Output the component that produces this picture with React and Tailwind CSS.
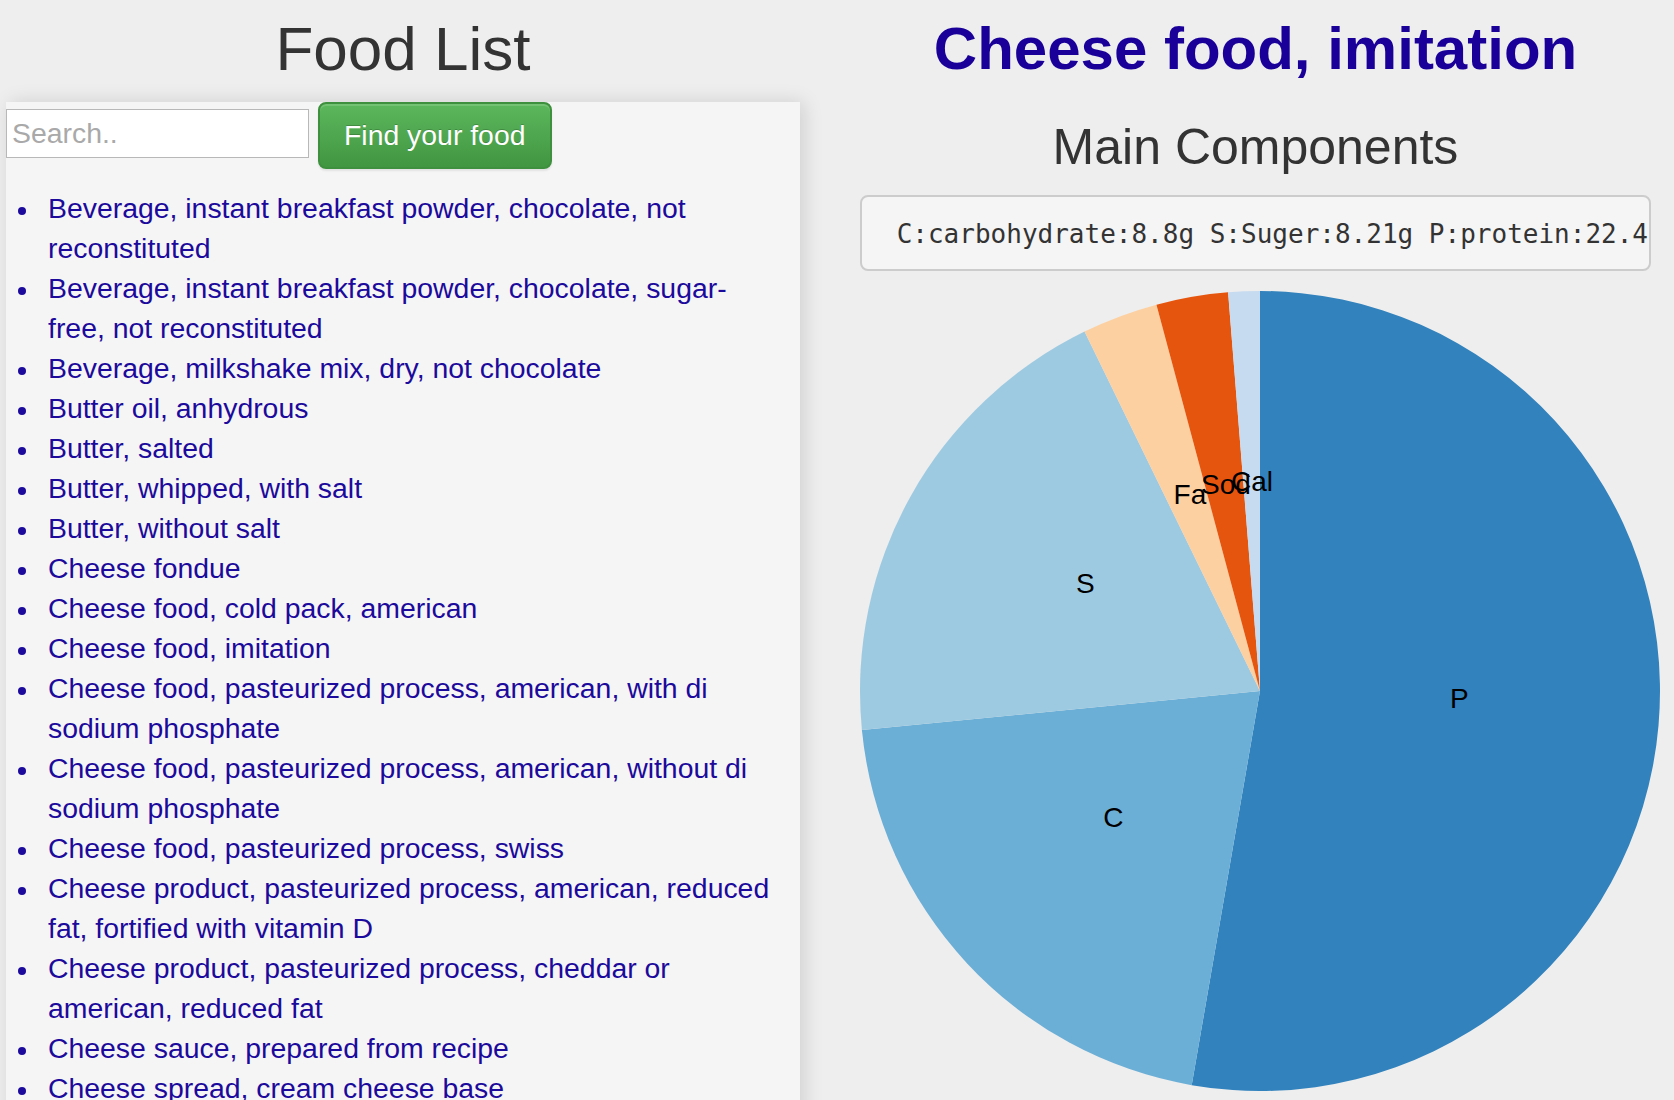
import React from "react";

const foods = [
  "Beverage, instant breakfast powder, chocolate, not reconstituted",
  "Beverage, instant breakfast powder, chocolate, sugar-free, not reconstituted",
  "Beverage, milkshake mix, dry, not chocolate",
  "Butter oil, anhydrous",
  "Butter, salted",
  "Butter, whipped, with salt",
  "Butter, without salt",
  "Cheese fondue",
  "Cheese food, cold pack, american",
  "Cheese food, imitation",
  "Cheese food, pasteurized process, american, with di sodium phosphate",
  "Cheese food, pasteurized process, american, without di sodium phosphate",
  "Cheese food, pasteurized process, swiss",
  "Cheese product, pasteurized process, american, reduced fat, fortified with vitamin D",
  "Cheese product, pasteurized process, cheddar or american, reduced fat",
  "Cheese sauce, prepared from recipe",
  "Cheese spread, cream cheese base",
  "Cheese spread, pasteurized process, american",
  "Cheese, american cheddar, imitation",
];

const slices = [
  { label: "P", value: 22.4, color: "#3182bd" },
  { label: "C", value: 8.8, color: "#6baed6" },
  { label: "S", value: 8.21, color: "#9ecae1" },
  { label: "Fa", value: 1.3, color: "#fdd0a2" },
  { label: "Sod", value: 1.23, color: "#e6550d" },
  { label: "Cal", value: 0.54, color: "#c6dbef" },
];

function Pie() {
  const cx = 400;
  const cy = 400;
  const r = 400;
  const total = slices.reduce((s, d) => s + d.value, 0);
  let a = 0;
  const arcs = slices.map((d) => {
    const a0 = a;
    const a1 = a + (d.value / total) * Math.PI * 2;
    a = a1;
    const x0 = cx + r * Math.sin(a0);
    const y0 = cy - r * Math.cos(a0);
    const x1 = cx + r * Math.sin(a1);
    const y1 = cy - r * Math.cos(a1);
    const large = a1 - a0 > Math.PI ? 1 : 0;
    const path = `M${cx},${cy}L${x0},${y0}A${r},${r} 0 ${large} 1 ${x1},${y1}Z`;
    const m = (a0 + a1) / 2;
    return {
      ...d,
      path,
      lx: cx + (r / 2) * Math.sin(m),
      ly: cy - (r / 2) * Math.cos(m),
    };
  });
  return (
    <svg width="800" height="800" viewBox="0 0 800 800" className="block">
      {arcs.map((d) => (
        <path key={d.label} d={d.path} fill={d.color} />
      ))}
      {arcs.map((d) => (
        <text
          key={d.label + "t"}
          x={d.lx}
          y={d.ly}
          textAnchor="middle"
          fontSize="28"
          fill="#000"
          fontFamily="'Liberation Sans', Arial, sans-serif"
        >
          {d.label}
        </text>
      ))}
    </svg>
  );
}

export default function App() {
  return (
    <div className="flex h-screen overflow-hidden bg-[#eeeeee] font-['Liberation_Sans',Arial,sans-serif]">
      <div className="ml-[6px] flex w-[794px] shrink-0 flex-col">
        <h1 className="pt-[16px] pb-[20px] text-center text-[62px] font-normal leading-[66px] text-[#333333]">
          Food List
        </h1>
        <div className="flex-1 bg-[#f5f5f5] shadow-[4px_0_18px_rgba(0,0,0,0.13)]">
          <div className="flex items-start">
            <input
              type="text"
              placeholder="Search.."
              className="mt-[7px] h-[49px] w-[303px] border border-[#b8b8b8] bg-white px-[5px] text-[28.4px] text-[#333] outline-none placeholder:text-[#a9a9a9]"
            />
            <button className="ml-[9px] rounded-[8px] border-2 border-[#3e8f3e] bg-gradient-to-b from-[#5cb85c] to-[#419641] px-[24px] py-[12px] text-[28.4px] leading-[39px] text-white shadow-[inset_0_2px_0_rgba(255,255,255,0.15),0_2px_2px_rgba(0,0,0,0.08)] [text-shadow:0_-1px_0_rgba(0,0,0,0.2)]">
              Find your food
            </button>
          </div>
          <ul className="mt-[19px] pr-[28px] text-[28.4px] leading-[40px] text-[#1c0a9c]">
            {foods.map((f) => (
              <li key={f} className="flex">
                <span className="w-[42px] shrink-0 pl-[12px] pt-[19px]">
                  <span className="block h-[8px] w-[8px] rounded-full bg-[#1c0a9c]" />
                </span>
                <span>{f}</span>
              </li>
            ))}
          </ul>
        </div>
      </div>
      <div className="ml-[60px] w-[791px] shrink-0">
        <h1 className="pt-[16px] text-center text-[60px] font-bold leading-[66px] text-[#1a0099]">
          Cheese food, imitation
        </h1>
        <h2 className="mt-[38px] text-center text-[50px] font-normal leading-[55px] text-[#333333]">
          Main Components
        </h2>
        <pre className="mt-[20px] mb-[20px] overflow-hidden whitespace-pre rounded-[8px] border-2 border-[#cccccc] bg-[#f5f5f5] px-[19px] pt-[19px] pb-[16px] font-['DejaVu_Sans_Mono',Menlo,monospace] text-[26px] leading-[37px] text-[#333333]">
          {" C:carbohydrate:8.8g S:Suger:8.21g P:protein:22.4g Fa:fat:1.3g Sod:sodium:1.23g Cal:calcium:0.54g"}
        </pre>
        <Pie />
      </div>
    </div>
  );
}
